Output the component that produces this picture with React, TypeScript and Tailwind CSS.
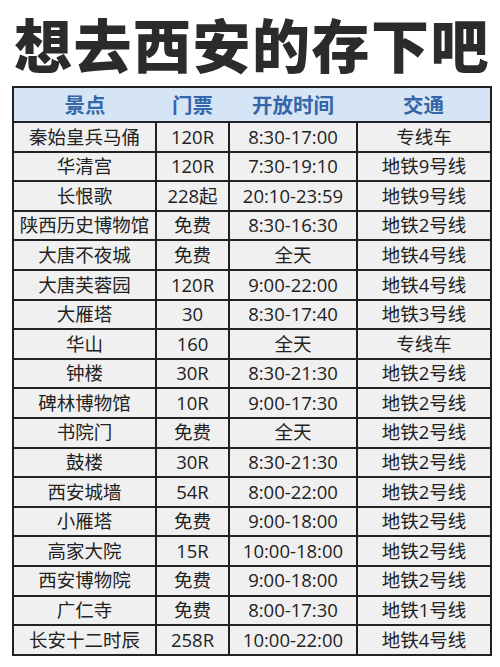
const rows: [string, string, string, string][] = [
  ["秦始皇兵马俑", "120R", "8:30-17:00", "专线车"],
  ["华清宫", "120R", "7:30-19:10", "地铁9号线"],
  ["长恨歌", "228起", "20:10-23:59", "地铁9号线"],
  ["陕西历史博物馆", "免费", "8:30-16:30", "地铁2号线"],
  ["大唐不夜城", "免费", "全天", "地铁4号线"],
  ["大唐芙蓉园", "120R", "9:00-22:00", "地铁4号线"],
  ["大雁塔", "30", "8:30-17:40", "地铁3号线"],
  ["华山", "160", "全天", "专线车"],
  ["钟楼", "30R", "8:30-21:30", "地铁2号线"],
  ["碑林博物馆", "10R", "9:00-17:30", "地铁2号线"],
  ["书院门", "免费", "全天", "地铁2号线"],
  ["鼓楼", "30R", "8:30-21:30", "地铁2号线"],
  ["西安城墙", "54R", "8:00-22:00", "地铁2号线"],
  ["小雁塔", "免费", "9:00-18:00", "地铁2号线"],
  ["高家大院", "15R", "10:00-18:00", "地铁2号线"],
  ["西安博物院", "免费", "9:00-18:00", "地铁2号线"],
  ["广仁寺", "免费", "8:00-17:30", "地铁1号线"],
  ["长安十二时辰", "258R", "10:00-22:00", "地铁4号线"],
];

const headers = ["景点", "门票", "开放时间", "交通"];

export default function App() {
  return (
    <div className="w-[500px] h-[667px] bg-white overflow-hidden font-['Open_Sans','Noto_Sans_CJK_SC',sans-serif]">
      <h1 className="h-[86px] pt-[14px] pl-[14px] text-[58px] tracking-[1.5px] leading-none font-black text-[#2b2b2b] font-['Noto_Sans_CJK_SC',sans-serif] whitespace-nowrap">
        想去西安的存下吧
      </h1>
      <table className="ml-[12px] w-[478px] table-fixed border-collapse border-2 border-[#222]">
        <colgroup>
          <col className="w-[143px]" />
          <col className="w-[73px]" />
          <col className="w-[128px]" />
          <col className="w-[134px]" />
        </colgroup>
        <thead>
          <tr className="h-[35px] bg-[#d5e5f6]">
            {headers.map((h) => (
              <th
                key={h}
                className="border-b-2 border-[#222] p-0 text-[20.5px] leading-none font-bold text-[#3566a8] font-['Noto_Sans_CJK_SC',sans-serif]"
              >
                {h}
              </th>
            ))}
          </tr>
        </thead>
        <tbody>
          {rows.map((r) => (
            <tr key={r[0]} className="h-[29.6px] bg-[#f0f0f0]">
              {r.map((c, i) => (
                <td
                  key={i}
                  className="border-2 border-[#222] p-0 text-center text-[18.5px] leading-none text-[#222] whitespace-nowrap"
                >
                  {c}
                </td>
              ))}
            </tr>
          ))}
        </tbody>
      </table>
    </div>
  );
}
